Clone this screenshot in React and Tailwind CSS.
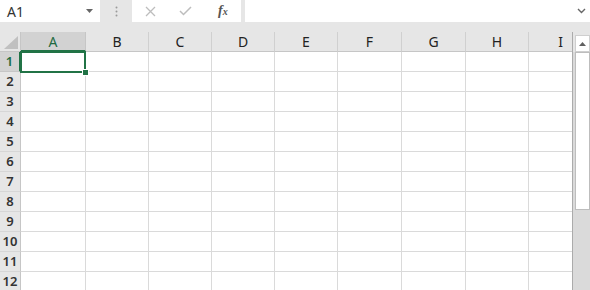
import React from "react";

const cols = [
  { l: "A", w: "w-[65px]" },
  { l: "B", w: "w-[63px]" },
  { l: "C", w: "w-[63px]" },
  { l: "D", w: "w-[63px]" },
  { l: "E", w: "w-[63px]" },
  { l: "F", w: "w-[64px]" },
  { l: "G", w: "w-[64px]" },
  { l: "H", w: "w-[63px]" },
  { l: "I", w: "w-[43px]" },
];

const rows = [1, 2, 3, 4, 5, 6, 7, 8, 9, 10, 11, 12];

export default function App() {
  return (
    <div
      className="w-[590px] h-[290px] overflow-hidden bg-[#e6e6e6] flex flex-col"
      style={{ fontFamily: '"Noto Sans", "Open Sans", sans-serif' }}
    >
      {/* toolbar */}
      <div className="h-[32px] flex items-start shrink-0">
        <div className="h-[22px] w-[100px] bg-white flex items-center justify-between pl-[7px] pr-[7px]">
          <span className="text-[14px] text-[#333]">A1</span>
          <svg width="7" height="4" viewBox="0 0 7 4">
            <path d="M0 0 L7 0 L3.5 4 Z" fill="#666" />
          </svg>
        </div>
        <div className="w-[32px] h-[22px] flex items-center justify-center">
          <svg width="3" height="11" viewBox="0 0 3 11">
            <circle cx="1.5" cy="1.5" r="1" fill="#9a9a9a" />
            <circle cx="1.5" cy="5.5" r="1" fill="#9a9a9a" />
            <circle cx="1.5" cy="9.5" r="1" fill="#9a9a9a" />
          </svg>
        </div>
        <div className="h-[22px] w-[109px] bg-white flex items-center">
          <svg className="ml-[13px]" width="11" height="11" viewBox="0 0 11 11">
            <path d="M1 1 L10 10 M10 1 L1 10" stroke="#bdbdbd" strokeWidth="1.3" />
          </svg>
          <svg className="ml-[23px]" width="13" height="10" viewBox="0 0 13 10">
            <path d="M1 5 L4.5 8.5 L12 1" stroke="#bdbdbd" strokeWidth="1.5" fill="none" />
          </svg>
          <span
            className="ml-[26px] text-[14px] italic text-[#555] leading-none"
            style={{ fontFamily: '"Liberation Serif", serif' }}
          >
            <i className="font-bold">f</i>
            <span className="text-[10px] font-bold">x</span>
          </span>
        </div>
        <div className="ml-[4px] h-[22px] flex-1 bg-white flex items-center justify-end pr-[4px]">
          <svg width="9" height="6" viewBox="0 0 9 6">
            <path d="M1 1 L4.5 4.5 L8 1" stroke="#666" strokeWidth="1.4" fill="none" />
          </svg>
        </div>
      </div>

      <div className="flex flex-1 min-h-0">
        {/* grid */}
        <div className="flex flex-col w-[572px]">
          {/* header row */}
          <div className="flex h-[20px] shrink-0">
            <div className="w-[21px] h-[20px] border-r border-b border-[#c6c6c6] flex items-end justify-end pr-[2px] pb-[2px]">
              <svg width="14" height="13" viewBox="0 0 14 13">
                <path d="M14 0 L14 13 L0 13 Z" fill="#c0c0c0" />
              </svg>
            </div>
            {cols.map((c, i) => (
              <div
                key={c.l}
                className={`${c.w} h-[20px] flex items-center justify-center text-[14px] border-b ${
                  i === 0
                    ? "bg-[#d2d2d2] text-[#1e6b41] border-r border-r-[#c6c6c6] border-b-[#217346] border-b-2"
                    : "text-[#222] border-r border-[#d0d0d0] border-b-[#c6c6c6]"
                } ${i === cols.length - 1 ? "border-r-0 justify-end pr-[9px]" : ""}`}
              >
                {c.l}
              </div>
            ))}
          </div>
          {/* rows */}
          {rows.map((r) => (
            <div key={r} className={`flex h-[20px] shrink-0 relative ${r === 1 ? "z-10" : ""}`}>
              <div
                className={`w-[21px] h-[20px] flex items-center justify-center text-[13px] font-semibold border-r border-b ${
                  r === 1
                    ? "bg-[#d2d2d2] text-[#1e6b41] border-r-2 border-r-[#217346] border-b-[#c6c6c6]"
                    : "text-[#333] border-r-[#c6c6c6] border-b-[#d6d6d6]"
                }`}
              >
                {r}
              </div>
              {cols.map((c, i) => (
                <div
                  key={c.l}
                  className={`${c.w} h-[20px] bg-white border-b border-[#dadada] ${
                    i === cols.length - 1 ? "" : "border-r"
                  }`}
                />
              ))}
              {r === 1 && (
                <>
                  <div className="absolute left-[20px] top-[-1px] w-[66px] h-[22px] border-2 border-[#217346] z-10" />
                  <div className="absolute left-[82px] top-[17px] w-[7px] h-[7px] bg-[#217346] border border-white z-20" />
                </>
              )}
            </div>
          ))}
        </div>

        {/* scrollbar */}
        <div className="w-[18px] flex flex-col border-l border-[#ababab]">
          <div className="h-[3px] bg-[#e6e6e6]" />
          <div className="ml-[2px] h-[17px] bg-white border border-[#cfcfcf] flex items-center justify-center">
            <svg width="7" height="4" viewBox="0 0 7 4">
              <path d="M0 4 L7 4 L3.5 0 Z" fill="#606060" />
            </svg>
          </div>
          <div className="flex-1 bg-[#dadada] pl-[2px] flex flex-col">
            <div className="h-[158px] bg-white border border-[#bdbdbd]" />
          </div>
        </div>
      </div>
    </div>
  );
}
